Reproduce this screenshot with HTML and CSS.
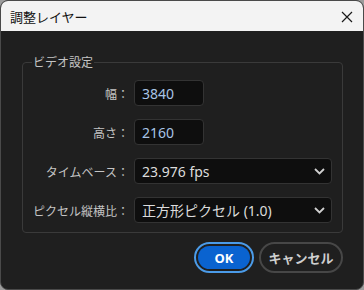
FILE: index.html
```html
<!DOCTYPE html>
<html lang="ja">
<head>
	<meta charset="utf-8">
	<title>調整レイヤー</title>
	<link rel="stylesheet" href="styles.css">
</head>
<body>
	<div class="win">
		<div class="win-title">
			<span>調整レイヤー</span>
			<svg class="win-close" width="12" height="12" viewBox="0 0 12 12"><path d="M1 1L11 11M11 1L1 11" stroke="#1a1a1a" stroke-width="1.2" fill="none"/></svg>
		</div>
		<div class="win-body">
			<fieldset class="group">
				<legend>ビデオ設定</legend>
				<div class="form">
					<label>幅：</label>
					<div class="field field-num">3840</div>
					<label>高さ：</label>
					<div class="field field-num">2160</div>
					<label>タイムベース：</label>
					<div class="field field-select">
						<span>23.976 fps</span>
						<svg width="11" height="7" viewBox="0 0 11 7"><path d="M1 1L5.5 5.5L10 1" stroke="#d0d0d0" stroke-width="1.8" fill="none"/></svg>
					</div>
					<label>ピクセル縦横比：</label>
					<div class="field field-select">
						<span>正方形ピクセル (1.0)</span>
						<svg width="11" height="7" viewBox="0 0 11 7"><path d="M1 1L5.5 5.5L10 1" stroke="#d0d0d0" stroke-width="1.8" fill="none"/></svg>
					</div>
				</div>
			</fieldset>
			<div class="buttons">
				<a class="btn btn-ok" href="#"><span>OK</span></a>
				<a class="btn btn-cancel" href="#">キャンセル</a>
			</div>
		</div>
	</div>
</body>
</html>
```

FILE: styles.css
```css
html, body{
	margin: 0;
	padding: 0;
	background: #9c9c9c;
}
body{
	width: 364px;
	height: 290px;
	font-family: "Noto Sans", "Noto Sans CJK JP", sans-serif;
	font-size: 12px;
	overflow: hidden;
}
.win{
	box-sizing: border-box;
	width: 364px;
	height: 290px;
	border: 1px solid #4a4a4a;
	border-radius: 8px;
	background: #1f1f1f;
	overflow: hidden;
}
.win-title{
	height: 30px;
	background: #f3f3f3;
	color: #111;
	font-size: 13px;
	font-family: "Noto Sans CJK JP", sans-serif;
	display: flex;
	align-items: center;
	justify-content: space-between;
	padding: 0 10px 0 9px;
}
.win-close{
	display: block;
	margin-top: 1px;
}
.win-body{
	padding: 23px 20px 0 21px;
}
.group{
	margin: 0;
	padding: 0 10px 9px 10px;
	border: 1px solid #3a3a3a;
	border-radius: 4px;
	min-width: 0;
}
.group legend{
	margin-left: -1px;
	padding: 0 1px;
	color: #c4c4c4;
	font-family: "Noto Sans CJK JP", sans-serif;
	font-size: 12px;
	line-height: 16px;
}
.form{
	display: grid;
	grid-template-columns: auto 1fr;
	column-gap: 5px;
	row-gap: 13px;
	align-items: center;
	padding-top: 10px;
}
.form label{
	color: #c4c4c4;
	font-family: "Noto Sans CJK JP", sans-serif;
	font-size: 12px;
	text-align: right;
}
.field{
	box-sizing: border-box;
	height: 26px;
	background: #0e0e0e;
	border: 1px solid #333;
	border-radius: 4px;
	padding: 0 7px;
	display: flex;
	align-items: center;
	font-size: 14px;
	color: #dcdcdc;
}
.field-num{
	width: 70px;
	color: #a8c4e6;
}
.field-select{
	justify-content: space-between;
	padding-right: 6px;
}
.field-select span{
	font-family: "Noto Sans", "Noto Sans CJK JP", sans-serif;
}
.field-select svg{
	display: block;
}
.buttons{
	display: flex;
	justify-content: flex-end;
	gap: 5px;
	margin-top: 9px;
}
.btn{
	box-sizing: border-box;
	height: 31px;
	border-radius: 16px;
	display: flex;
	align-items: center;
	justify-content: center;
	text-decoration: none;
	font-weight: bold;
	font-size: 13px;
}
.btn-ok{
	width: 60px;
	border: 2px solid #4b9be8;
	padding: 2px;
}
.btn-ok span{
	flex: 1;
	height: 100%;
	border-radius: 12px;
	background: #0a63d0;
	color: #fff;
	display: flex;
	align-items: center;
	justify-content: center;
}
.btn-cancel{
	width: 84px;
	border: 2px solid #474747;
	color: #cfcfcf;
	font-family: "Noto Sans CJK JP", sans-serif;
}
```
